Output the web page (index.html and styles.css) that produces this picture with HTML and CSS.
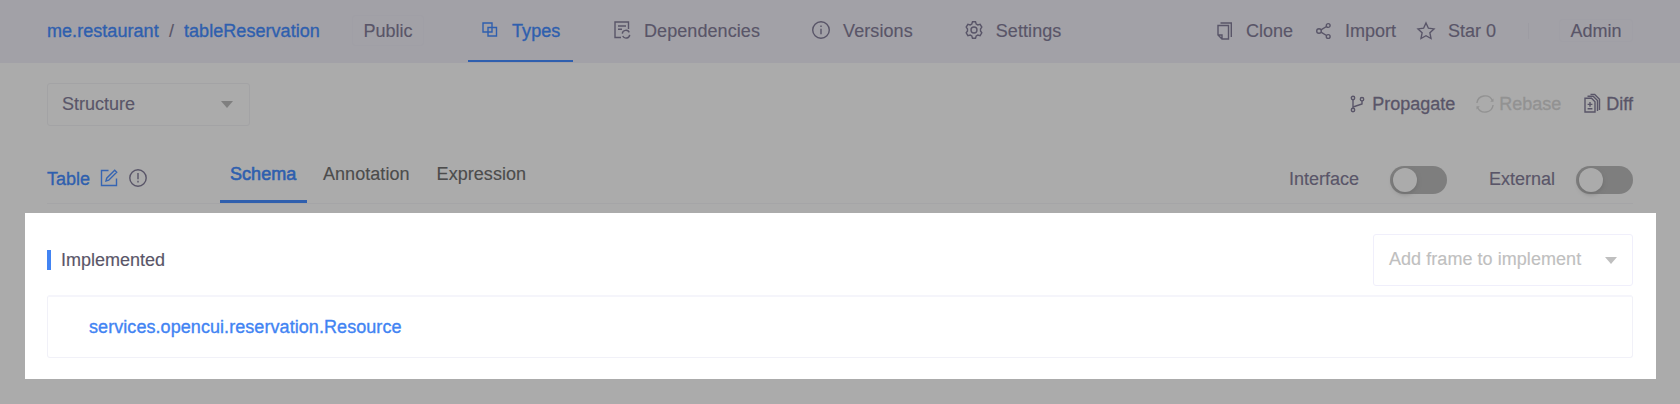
FILE: index.html
```html
<!DOCTYPE html>
<html lang="en">
<head>
<meta charset="utf-8">
<title>tableReservation</title>
<link rel="stylesheet" href="styles.css">
</head>
<body>
<header class="topbar">
  <div class="crumbs"><a class="link w-org">me.restaurant</a><span class="slash">/</span><a class="link">tableReservation</a></div>
  <span class="badge">Public</span>
  <nav class="nav">
    <a class="nav-item active"><svg class="icon" viewBox="0 0 18 18"><path d="M2 2h9v9H2zM7 6.500h8.500v8.500H7z"/></svg><span>Types</span></a>
    <a class="nav-item deps"><svg class="icon" viewBox="0 0 18 18"><path d="M8 16.500H2V1h13.500v7M5 5h8M5 8.200h4"/><path d="M9.300 12.600a3.700 3.700 0 0 1 7-1.200M16.700 13.800a3.700 3.700 0 0 1-7 1.200"/></svg><span>Dependencies</span></a>
    <a class="nav-item vers"><svg class="icon" viewBox="0 0 18 18"><circle cx="9" cy="9" r="8.300"/><path d="M9 7.800v5.400M9 4.500v1.500"/></svg><span>Versions</span></a>
    <a class="nav-item sett"><svg class="icon" viewBox="0 0 18 18"><path d="M7.500.8h3l.7 2.200 1.600.9 2.300-.6 1.700 2.800L15.500 8v2l1.300 1.800-1.700 2.900-2.300-.6-1.600.9-.7 2.300h-3L6.800 15l-1.600-.9-2.300.6-1.700-2.900L2.500 10V8L1.200 6.100l1.700-2.800 2.300.6L6.800 3z"/><circle cx="9" cy="9" r="3"/></svg><span>Settings</span></a>
  </nav>
  <div class="actions">
    <a class="action clone"><svg class="icon" viewBox="0 0 18 18"><path d="M2 3.500h10.500V17H6l-4-4zM2 13h4v4M4.500 1h10.800v14"/></svg><span>Clone</span></a>
    <a class="action import"><svg class="icon" viewBox="0 0 18 18"><circle cx="4" cy="9" r="2.300"/><circle cx="13.200" cy="3.500" r="1.900"/><circle cx="13.200" cy="14.500" r="1.900"/><path d="M6 7.900l5.500-3.400M6 10.200l5.500 3.300"/></svg><span>Import</span></a>
    <a class="action star"><svg class="icon" viewBox="0 0 18 18"><path d="M9 1l2.400 5.200 5.600.7-4.100 3.900 1.100 5.700L9 13.700l-5 2.800 1.100-5.700L1 6.900l5.600-.7z"/></svg><span>Star 0</span></a>
    <i class="divider"></i>
    <span class="admin">Admin</span>
  </div>
</header>
<section class="toolbar">
  <div class="select"><span>Structure</span><i class="caret"></i></div>
  <div class="tools">
    <a class="tool"><svg class="icon" viewBox="0 0 18 18"><circle cx="4" cy="3" r="1.700"/><circle cx="4" cy="15" r="1.700"/><circle cx="13" cy="4.200" r="1.700"/><path d="M4 4.700v8.600M13 5.900v3L4 12"/></svg><span>Propagate</span></a>
    <a class="tool muted rebase"><svg class="icon" viewBox="0 0 18 18"><path d="M.9 8A8.200 8.200 0 0 1 16.500 5.800M17.100 10A8.200 8.200 0 0 1 1.500 12.200"/><path class="solid" d="M17.500 3.500v3.300h-3.300zM.5 14.500v-3.300h3.300z"/></svg><span>Rebase</span></a>
    <a class="tool diff"><svg class="icon" viewBox="0 0 18 18"><path d="M2 3.300h6.500l3.500 3.500V17H2z"/><path d="M4.500 1.200h5.700l4.300 4.300V16M7.500-.6h4.200l4.800 4.800V15M7 7v4.800M4.600 9.400h4.800M4.600 13.700h4.800"/></svg><span>Diff</span></a>
  </div>
</section>
<section class="tabs">
  <div class="title"><span class="link">Table</span>
    <svg class="icon edit" viewBox="0 0 18 18"><path d="M8.500 1.500H1.500v15h15V9.500M6 12l.7-2.800 8-8 2 2-8 8z"/></svg>
    <svg class="icon alert" viewBox="0 0 18 18"><circle cx="9" cy="9" r="8.200"/><path d="M9 4v6.300M9 11.800v1.700"/></svg>
  </div>
  <nav class="tab-list"><a class="tab selected">Schema</a><a class="tab">Annotation</a><a class="tab">Expression</a></nav>
  <div class="switches"><span>Interface</span><i class="switch"><b></b></i><span class="ext">External</span><i class="switch second"><b></b></i></div>
</section>
<main class="panel">
  <div class="panel-head"><h2>Implemented</h2><div class="select add"><span>Add frame to implement</span><i class="caret"></i></div></div>
  <div class="row">services.opencui.reservation.Resource</div>
</main>
</body>
</html>
```
FILE: styles.css
```css
* { box-sizing: border-box; }
body { margin: 0; width: 1680px; height: 404px; overflow: hidden; background: #ababab; color: #595568; font: 18px/22px "Liberation Sans", Arial, sans-serif; -webkit-text-stroke: .15px; }
.icon { width: 18px; height: 18px; flex: none; fill: none; stroke: currentColor; stroke-width: 1.4; overflow: visible; }
.solid { fill: currentColor; stroke: none; }
.link { color: #2f5fae; -webkit-text-stroke: .35px; }
.topbar { display: flex; height: 63px; padding: 0 47px; background: #a2a1a7; }
.crumbs { display: flex; padding-top: 20px; width: 305px; white-space: nowrap; letter-spacing: .05px; }
.w-org { width: 112px; }
.slash { width: 25px; text-align: center; }
.badge { width: 72px; height: 31px; margin-top: 15px; border: 1px solid #a09fa6; border-radius: 3px; text-align: center; line-height: 30px; }
.nav { display: flex; margin-left: 44px; }
.nav-item { display: flex; height: 62px; padding: 20px 0 0 13px; gap: 13px; letter-spacing: .08px; }
.nav-item .icon { margin-top: 1px; }
.active { width: 105px; color: #2f5fae; border-bottom: 2px solid #2f5fae; -webkit-text-stroke: .35px; }
.deps { margin-left: 27px; }
.vers { margin-left: 39px; }
.sett { margin-left: 39px; }
.actions { display: flex; margin-left: auto; padding-top: 20px; }
.action { display: flex; gap: 13px; }
.action .icon { margin-top: 2px; }
.clone { gap: 12px; }
.import { margin-left: 22px; gap: 12px; }
.star { margin-left: 21px; }
.divider { width: 1px; height: 16px; margin: 3px 30px 0 32px; background: #9d9ca3; }
.admin { width: 74px; height: 23px; margin-top: -1px; padding-top: 1px; text-align: center; border: 1px solid #a09fa6; border-radius: 3px; line-height: 21px; }
.toolbar { display: flex; justify-content: space-between; height: 92px; padding: 20px 47px 0; }
.select { display: flex; align-items: center; justify-content: space-between; width: 203px; height: 43px; padding: 0 16px 2px 14px; border: 1px solid #a3a3a5; border-radius: 3px; }
.caret { border: 6px solid transparent; border-top: 7px solid #7f7f7f; border-bottom: 0; margin-top: 2px; }
.tools { display: flex; padding-top: 10px; }
.tool { display: flex; gap: 5px; -webkit-text-stroke: .3px; }
.tool .icon { margin-top: 2px; }
.rebase { margin-left: 21px; }
.diff { margin-left: 22px; }
.muted { color: #929292; }
.tabs { display: flex; height: 49px; margin: 0 47px; border-bottom: 1px solid #a5a5a7; }
.title { display: flex; width: 173px; padding-top: 13px; }
.title .icon { margin-top: 1px; }
.edit { margin-left: 10px; color: #3665b2; }
.alert { margin-left: 11px; }
.tab-list { display: flex; height: 48px; }
.tab { padding: 8px 13px 0 14px; color: #4c4c4c; letter-spacing: .05px; }
.selected { width: 87px; padding: 8px 0 0 10px; margin-right: 2px; color: #2f5fae; border-bottom: 3px solid #2f5fae; -webkit-text-stroke: .6px; }
.switches { display: flex; margin-left: auto; padding-top: 13px; }
.switch { width: 57px; height: 28px; margin: -2px 0 0 31px; padding: 2px 3px; border-radius: 14px; background: #7e7e7e; }
.switch b { display: block; width: 24px; height: 24px; border-radius: 50%; background: #ababab; box-shadow: 0 2px 4px #6669; }
.ext { margin-left: 42px; }
.second { margin-left: 21px; }
.panel { width: 1631px; height: 166px; margin: 9px 0 0 25px; padding: 21px 23px 0 22px; background: #fff; }
.panel-head { display: flex; align-items: center; justify-content: space-between; height: 52px; }
h2 { height: 20px; margin: 0; padding-left: 10px; border-left: 4px solid #4284f3; font-size: 18px; font-weight: 400; line-height: 20px; }
.add { width: 260px; height: 52px; padding-right: 15px; padding-left: 15px; border-color: #f0effb; color: #bfbfbf; letter-spacing: .05px; }
.add .caret { border-top-color: #bfbfbf; }
.row { height: 63px; margin-top: 9px; padding: 19px 41px; border: 1px solid #f1f1f8; border-top: 2px solid #f5f5fb; border-radius: 3px; color: #4284f3; letter-spacing: .065px; -webkit-text-stroke: .35px; }
```
